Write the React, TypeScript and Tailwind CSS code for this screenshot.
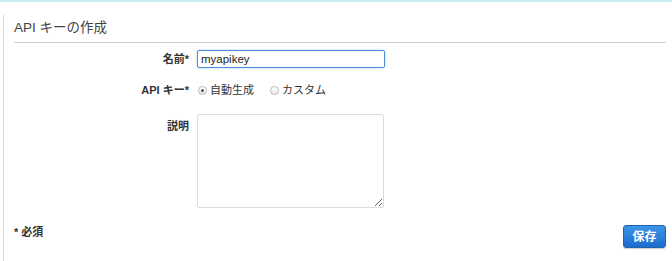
import React from "react";

const font = "font-['Liberation_Sans','Noto_Sans_CJK_JP',sans-serif]";

function Radio({ checked, label }: { checked?: boolean; label: string }) {
  return (
    <label className="flex items-center gap-[3px]">
      <span className="flex h-[9px] w-[9px] items-center justify-center rounded-full border border-[#b9b9b9] bg-gradient-to-b from-white to-[#e9e9e9]">
        {checked && <span className="h-[3px] w-[3px] rounded-full bg-[#555]" />}
      </span>
      <span>{label}</span>
    </label>
  );
}

export default function App() {
  return (
    <div className={`h-[261px] w-[672px] overflow-hidden bg-white text-[#333] ${font}`}>
      <div className="h-[2px] bg-[#cbeef5]" />
      <div className="ml-[3px] mt-[13px] h-full border-l border-[#d6d6d6] pl-[10px] pr-[6px]">
        <div className="flex h-[28px] items-center border-b border-[#cccccc] text-[13.5px] text-[#444]">
          API キーの作成
        </div>

        <div className="pt-[7px] text-[11px]">
          <div className="flex items-center">
            <div className="w-[176px] pr-[1px] text-right font-bold">名前*</div>
            <input
              defaultValue="myapikey"
              className="ml-[7px] h-[18px] w-[188px] rounded-[2px] border border-[#4d90d8] px-[3px] text-[11.5px] text-[#222] outline-none shadow-[0_0_2px_rgba(77,144,216,0.6)]"
            />
          </div>

          <div className="mt-[12px] flex h-[20px] items-center">
            <div className="w-[176px] pr-[1px] text-right font-bold">API キー*</div>
            <div className="ml-[7px] flex items-center gap-[16px] pl-[1px] text-[11px]">
              <Radio checked label="自動生成" />
              <Radio label="カスタム" />
            </div>
          </div>

          <div className="mt-[14px] flex items-start">
            <div className="w-[176px] pr-[1px] pt-[4px] text-right font-bold">説明</div>
            <textarea className="ml-[7px] h-[94px] w-[187px] rounded-[2px] border border-[#dcdcdc] outline-none" />
          </div>

          <div className="mt-[17px] flex items-start justify-between">
            <div className="leading-[14px] font-bold">* 必須</div>
            <button className="h-[23px] w-[43px] rounded-[3px] border border-[#1e62b0] bg-gradient-to-b from-[#3d94e6] to-[#1b6ccb] text-[12px] font-bold text-white shadow-[0_1px_1px_rgba(0,0,0,0.2)]">
              保存
            </button>
          </div>
        </div>
      </div>
    </div>
  );
}
